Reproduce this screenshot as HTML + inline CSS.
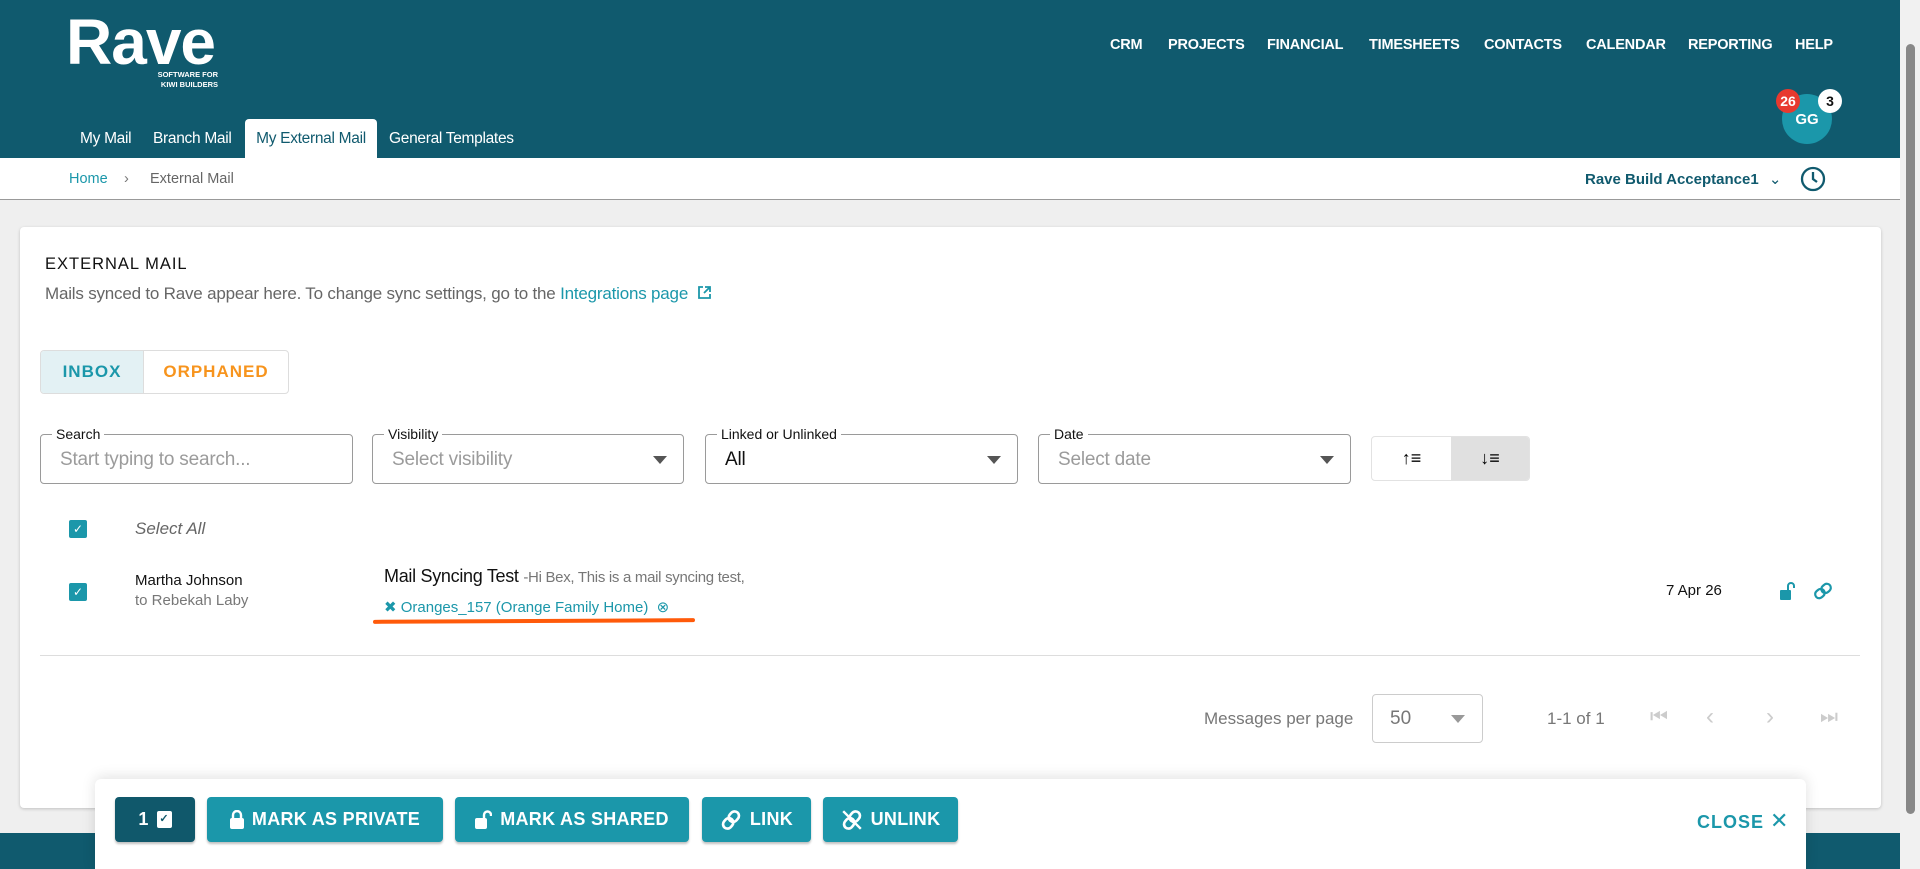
<!DOCTYPE html>
<html><head><meta charset="utf-8"><style>
*{box-sizing:border-box;margin:0;padding:0}
body{width:1920px;height:869px;overflow:hidden;background:#efefef;font-family:"Liberation Sans",sans-serif;position:relative}
.abs{position:absolute}
#hdr{left:0;top:0;width:1900px;height:158px;background:#105a6e}
.nav{top:37px;color:#fff;font-weight:bold;font-size:14.5px;letter-spacing:-.2px}
.tab{top:119px;height:39px;line-height:39px;color:#fff;font-size:15.5px;letter-spacing:-.3px}
#crumb{left:0;top:158px;width:1900px;height:42px;background:#fff;border-bottom:1px solid #999}
#card{left:20px;top:227px;width:1861px;height:581px;background:#fff;border-radius:4px;box-shadow:0 1px 3px rgba(0,0,0,.2)}
.fld{top:434px;height:50px;border:1px solid #9a9a9a;border-radius:4px;background:#fff}
.fld label{position:absolute;top:-9px;left:11px;background:#fff;padding:0 4px;font-size:14px;color:#111;line-height:16px}
.fld span{position:absolute;left:19px;top:14px;font-size:19px;color:#9b9b9b;letter-spacing:-.2px}
.tri{position:absolute;right:16px;top:21px;width:0;height:0;border-left:7px solid transparent;border-right:7px solid transparent;border-top:8px solid #555}
.cb{width:18px;height:18px;background:#1b97aa;border-radius:2px;color:#fff;font-size:12px;text-align:center;line-height:18px}
.btn{top:797px;height:45px;background:#1b97aa;border-radius:4px;color:#fff;font-weight:bold;font-size:18px;line-height:45px;letter-spacing:.3px;box-shadow:0 2px 2px rgba(0,0,0,.25);display:flex;align-items:center;justify-content:center;gap:8px}
</style></head><body>
<div id="hdr" class="abs"></div>
<div class="abs" style="left:66px;top:10px;color:#fff;font-size:64px;font-weight:bold;letter-spacing:-1px;line-height:64px">Rave</div>
<div class="abs" style="left:145px;top:70px;color:#fff;font-size:7.5px;font-weight:bold;line-height:10px;text-align:right;width:73px">SOFTWARE FOR<br>KIWI BUILDERS</div>
<div class="abs nav" style="left:1110px">CRM</div>
<div class="abs nav" style="left:1168px">PROJECTS</div>
<div class="abs nav" style="left:1267px">FINANCIAL</div>
<div class="abs nav" style="left:1369px">TIMESHEETS</div>
<div class="abs nav" style="left:1484px">CONTACTS</div>
<div class="abs nav" style="left:1586px">CALENDAR</div>
<div class="abs nav" style="left:1688px">REPORTING</div>
<div class="abs nav" style="left:1795px">HELP</div>
<div class="abs" style="left:1782px;top:94px;width:50px;height:50px;border-radius:50%;background:#1b97aa;color:#fff;font-weight:bold;font-size:15px;text-align:center;line-height:52px">GG</div>
<div class="abs" style="left:1776px;top:89px;width:24px;height:24px;border-radius:50%;background:#e8392f;color:#fff;font-weight:bold;font-size:14px;text-align:center;line-height:24px">26</div>
<div class="abs" style="left:1818px;top:89px;width:24px;height:24px;border-radius:50%;background:#fff;color:#111;font-weight:bold;font-size:14px;text-align:center;line-height:24px">3</div>
<div class="abs tab" style="left:80px">My Mail</div>
<div class="abs tab" style="left:153px">Branch Mail</div>
<div class="abs tab" style="left:245px;width:132px;background:#fff;color:#105a6e;text-align:center;border-radius:4px 4px 0 0">My External Mail</div>
<div class="abs tab" style="left:389px">General Templates</div>
<div id="crumb" class="abs"></div>
<div class="abs" style="left:69px;top:171px;font-size:14.5px;color:#1b97aa">Home</div>
<div class="abs" style="left:124px;top:171px;font-size:14.5px;color:#777">›</div>
<div class="abs" style="left:150px;top:171px;font-size:14.5px;color:#666">External Mail</div>
<div class="abs" style="left:1585px;top:170px;font-size:15px;font-weight:bold;color:#105a6e">Rave Build Acceptance1 <span style="font-weight:normal;margin-left:6px">⌄</span></div>
<svg class="abs" style="left:1800px;top:166px" width="26" height="26" viewBox="0 0 26 26"><circle cx="13" cy="13" r="11" fill="none" stroke="#105a6e" stroke-width="2.3"/><path d="M13 6v7l4 3" fill="none" stroke="#105a6e" stroke-width="2.3"/></svg>
<div class="abs" style="left:1900px;top:0;width:20px;height:869px;background:#f1f1f1"></div>
<div class="abs" style="left:1906px;top:44px;width:9px;height:770px;background:#888;border-radius:5px"></div>
<div class="abs" style="left:0;top:833px;width:1900px;height:36px;background:#105a6e"></div>
<div id="card" class="abs"></div>
<div class="abs" style="left:45px;top:255px;font-size:16.5px;color:#111;letter-spacing:1px">EXTERNAL MAIL</div>
<div class="abs" style="left:45px;top:284px;font-size:17px;color:#666;letter-spacing:-.2px">Mails synced to Rave appear here. To change sync settings, go to the <span style="color:#1b97aa">Integrations page</span> <svg width="15" height="15" viewBox="0 0 15 15" style="vertical-align:-1px;margin-left:4px"><path d="M6 2H2v11h11V9M8 2h5v5M13 2L7 8" fill="none" stroke="#1b97aa" stroke-width="1.8"/></svg></div>
<div class="abs" style="left:40px;top:350px;width:249px;height:44px;border:1px solid #ddd;border-radius:4px;overflow:hidden;display:flex;font-size:17px;font-weight:bold;letter-spacing:1px">
<div style="width:103px;background:#e3f1f4;color:#1b97aa;text-align:center;line-height:42px;border-right:1px solid #ddd">INBOX</div>
<div style="flex:1;color:#f7941d;text-align:center;line-height:42px">ORPHANED</div></div>
<div class="abs fld" style="left:40px;width:313px"><label>Search</label><span>Start typing to search...</span></div>
<div class="abs fld" style="left:372px;width:312px"><label>Visibility</label><span>Select visibility</span><i class="tri"></i></div>
<div class="abs fld" style="left:705px;width:313px"><label>Linked or Unlinked</label><span style="color:#111">All</span><i class="tri"></i></div>
<div class="abs fld" style="left:1038px;width:313px"><label>Date</label><span>Select date</span><i class="tri"></i></div>
<div class="abs" style="left:1371px;top:436px;width:159px;height:45px;border:1px solid #e2e2e2;border-radius:4px;overflow:hidden;display:flex;font-size:18px;font-weight:bold">
<div style="width:79px;text-align:center;line-height:43px">↑≡</div><div style="flex:1;background:#e0e0e0;text-align:center;line-height:43px">↓≡</div></div>
<div class="abs cb" style="left:69px;top:520px">✓</div>
<div class="abs" style="left:135px;top:519px;font-size:17px;font-style:italic;color:#666">Select All</div>
<div class="abs cb" style="left:69px;top:583px">✓</div>
<div class="abs" style="left:135px;top:572px;font-size:15px;color:#111">Martha Johnson</div>
<div class="abs" style="left:135px;top:592px;font-size:15px;color:#777">to Rebekah Laby</div>
<div class="abs" style="left:384px;top:566px;font-size:18px;color:#111;letter-spacing:-.3px">Mail Syncing Test <span style="font-size:15px;color:#777">-Hi Bex, This is a mail syncing test,</span></div>
<div class="abs" style="left:384px;top:598px;font-size:15px;color:#1b97aa">✖ Oranges_157 (Orange Family Home) &nbsp;⊗</div>
<div class="abs" style="left:373px;top:619px;width:322px;height:4px;background:#ff5a0a;border-radius:2px;transform:rotate(-.3deg)"></div>
<div class="abs" style="left:1666px;top:582px;font-size:15px;color:#111">7 Apr 26</div>
<svg class="abs" style="left:1779px;top:582px" width="16" height="18" viewBox="0 0 16 18"><rect x="1" y="8" width="11" height="10" rx="1" fill="#1b97aa"/><path d="M9 8V4a3 3 0 0 1 6 0v2" fill="none" stroke="#1b97aa" stroke-width="2"/></svg>
<svg class="abs" style="left:1813px;top:582px" width="20" height="18" viewBox="0 0 20 18"><g fill="none" stroke="#1b97aa" stroke-width="2.2" transform="rotate(-40 10 9)"><rect x="1" y="5" width="10" height="8" rx="4"/><rect x="9" y="5" width="10" height="8" rx="4"/></g></svg>
<div class="abs" style="left:40px;top:655px;width:1820px;height:1px;background:#ddd"></div>
<div class="abs" style="left:1204px;top:709px;font-size:17px;color:#777">Messages per page</div>
<div class="abs" style="left:1372px;top:694px;width:111px;height:49px;border:1px solid #ccc;border-radius:4px"><span style="position:absolute;left:17px;top:13px;font-size:19px;color:#777">50</span><i class="tri" style="border-top-color:#999;top:20px;right:17px"></i></div>
<div class="abs" style="left:1547px;top:709px;font-size:17px;color:#777">1-1 of 1</div>
<div class="abs" style="left:1650px;top:706px;font-size:20px;color:#ccc">⏮</div>
<div class="abs" style="left:1706px;top:703px;font-size:24px;color:#ccc">‹</div>
<div class="abs" style="left:1766px;top:703px;font-size:24px;color:#ccc">›</div>
<div class="abs" style="left:1820px;top:706px;font-size:20px;color:#ccc">⏭</div>
<div class="abs" style="left:95px;top:779px;width:1711px;height:90px;background:#fff;border-radius:6px 6px 0 0;box-shadow:0 -2px 14px rgba(0,0,0,.12)"></div>
<div class="abs btn" style="left:115px;width:80px;background:#10586b">1 <span style="display:inline-block;width:15px;height:17px;background:#fff;color:#10586b;font-size:11px;line-height:17px;text-align:center;border-radius:2px">✓</span></div>
<div class="abs btn" style="left:207px;width:236px"><svg width="14" height="19" viewBox="0 0 14 19"><rect x="0" y="8" width="14" height="11" rx="2" fill="#fff"/><path d="M3 9V5a4 4 0 0 1 8 0v4" fill="none" stroke="#fff" stroke-width="2.4"/></svg>MARK AS PRIVATE</div>
<div class="abs btn" style="left:455px;width:234px"><svg width="17" height="19" viewBox="0 0 17 19"><rect x="0" y="8" width="12" height="11" rx="2" fill="#fff"/><path d="M9 9V5a3.5 3.5 0 0 1 7 0v1" fill="none" stroke="#fff" stroke-width="2.4"/></svg>MARK AS SHARED</div>
<div class="abs btn" style="left:702px;width:109px"><svg width="22" height="20" viewBox="0 0 20 18"><g fill="none" stroke="#fff" stroke-width="2.4" transform="rotate(-50 10 9)"><rect x="1" y="5" width="10" height="8" rx="4"/><rect x="9" y="5" width="10" height="8" rx="4"/></g></svg>LINK</div>
<div class="abs btn" style="left:823px;width:135px"><svg width="22" height="20" viewBox="0 0 20 18"><g fill="none" stroke="#fff" stroke-width="2.4" transform="rotate(-50 10 9)"><rect x="1" y="5" width="10" height="8" rx="4"/><rect x="9" y="5" width="10" height="8" rx="4"/></g><path d="M2 1L18 17" stroke="#fff" stroke-width="2.2"/></svg>UNLINK</div>
<div class="abs" style="left:1697px;top:808px;font-size:18px;font-weight:bold;color:#1b97aa;letter-spacing:1px">CLOSE <span style="font-weight:normal;font-size:22px">✕</span></div>
</body></html>
